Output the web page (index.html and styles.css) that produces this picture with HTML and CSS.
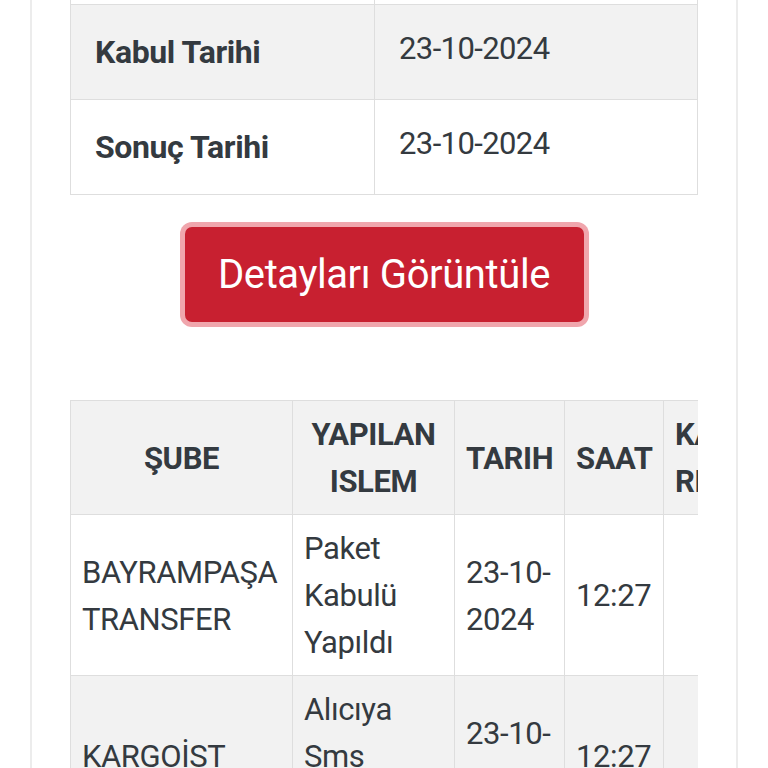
FILE: index.html
```html
<!DOCTYPE html>
<html lang="tr">
<head>
<meta charset="utf-8">
<title>Gönderi Takip</title>
<link rel="stylesheet" href="styles.css">
</head>
<body>
<div class="card">
  <table class="info">
    <tr><th>Alıcı Şube</th><td>KARGOİST</td></tr>
    <tr class="alt"><th>Kabul Tarihi</th><td>23-10-2024</td></tr>
    <tr><th>Sonuç Tarihi</th><td>23-10-2024</td></tr>
  </table>
  <div class="actions">
    <button class="btn" type="button">Detayları Görüntüle</button>
  </div>
  <div class="scroll">
    <table class="moves">
      <colgroup>
        <col class="c-sube"><col class="c-islem"><col class="c-tarih"><col class="c-saat"><col class="c-ref"><col class="c-desc">
      </colgroup>
      <thead>
        <tr><th>ŞUBE</th><th>YAPILAN ISLEM</th><th>TARIH</th><th>SAAT</th><th class="th-start">KARGO REFERANS</th><th>AÇIKLAMA</th></tr>
      </thead>
      <tbody>
        <tr><td>BAYRAMPAŞA TRANSFER</td><td>Paket Kabulü Yapıldı</td><td>23-10-2024</td><td>12:27</td><td></td><td></td></tr>
        <tr class="alt"><td>KARGOİST</td><td>Alıcıya Sms Gönderildi</td><td>23-10-2024</td><td>12:27</td><td></td><td></td></tr>
      </tbody>
    </table>
  </div>
</div>
</body>
</html>
```
FILE: styles.css
```css
html, body {
  margin: 0;
  padding: 0;
  background: #ffffff;
}
body {
  font-family: Roboto, "Liberation Sans", sans-serif;
  color: #343a40;
  font-size: 31px;
  line-height: 47px;
}
.card {
  margin: -93px 30px 0 30px;
  padding: 0 38px 40px 38px;
  border: 2px solid #ececec;
  background: #fff;
}
table {
  border-collapse: collapse;
}
.info {
  width: 100%;
  border: 1px solid #dedede;
  border-top: none;
}
.info th, .info td {
  border: 1px solid #dedede;
  text-align: left;
  vertical-align: middle;
  line-height: 47px;
}
.info th {
  width: 255px;
  padding: 24px 24px 23px 24px;
  font-weight: 700;
  font-size: 32px;
  letter-spacing: -0.4px;
}
.info td {
  padding: 20px 24px 27px 24px;
  font-weight: 400;
  letter-spacing: -0.6px;
}
.info tr.alt th, .info tr.alt td {
  background: #f2f2f2;
}
.actions {
  display: flex;
  justify-content: center;
  padding: 32px 0 78px 0;
}
.btn {
  font-family: Roboto, "Liberation Sans", sans-serif;
  font-size: 40px;
  line-height: 47px;
  color: #ffffff;
  background: #c82030;
  border: none;
  border-radius: 7px;
  width: 399px;
  height: 95px;
  padding: 0;
  letter-spacing: -0.4px;
  box-shadow: 0 0 0 5px #f0a6ad;
}
.scroll {
  overflow: hidden;
}
.moves {
  table-layout: fixed;
  width: 1000px;
}
.c-sube { width: 222px; }
.c-islem { width: 162px; }
.c-tarih { width: 110px; }
.c-saat { width: 99px; }
.c-ref { width: 200px; }
.c-desc { width: 207px; }
.moves th, .moves td {
  border: 1px solid #dedede;
  padding: 10px 11px 9px 11px;
  vertical-align: middle;
  letter-spacing: -0.4px;
}
.moves th {
  background: #f2f2f2;
  font-weight: 700;
  text-align: center;
}
.moves th.th-start {
  text-align: left;
}
.moves td {
  text-align: left;
  font-weight: 400;
}
.moves tr.alt td {
  background: #f2f2f2;
}
```
